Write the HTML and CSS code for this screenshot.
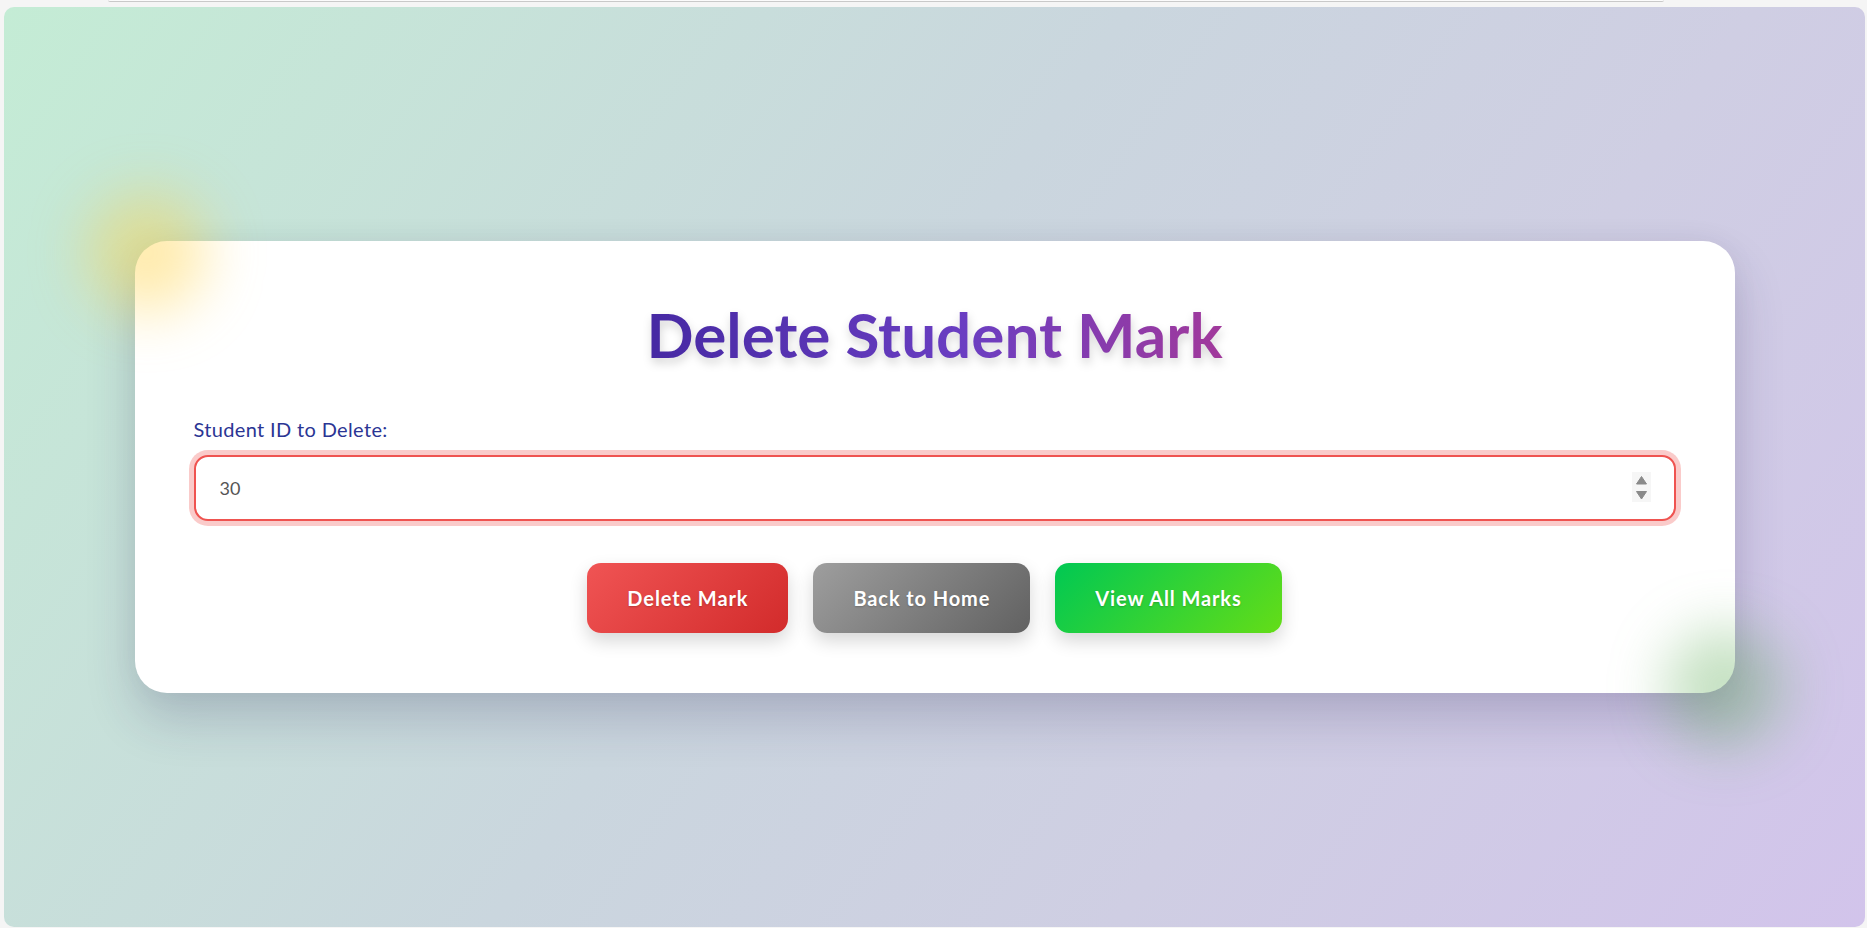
FILE: index.html
```html
<!DOCTYPE html>
<html lang="en">
<head>
<meta charset="utf-8">
<title>Delete Student Mark</title>
<link rel="stylesheet" href="styles.css">
</head>
<body>
  <div class="topbar"></div>
  <main class="panel">
    <section class="card">
      <div class="blob blob-yellow"></div>
      <div class="blob blob-green"></div>
      <h1 class="title">Delete Student Mark</h1>
      <form class="form" onsubmit="return false;">
        <label class="label" for="sid">Student ID to Delete:</label>
        <div class="field">
          <input class="input" id="sid" type="text" value="30">
          <svg class="spin" width="19" height="30" viewBox="0 0 19 30">
            <rect x="0" y="0" width="19" height="30" fill="#f6f6f6"/>
            <path d="M4.5 12 L14.5 12 L9.5 4.5 Z" fill="#8a8a8a" stroke="#8a8a8a" stroke-width="1" stroke-linejoin="round"/>
            <path d="M4.5 19.5 L14.5 19.5 L9.5 27 Z" fill="#8a8a8a" stroke="#8a8a8a" stroke-width="1" stroke-linejoin="round"/>
          </svg>
        </div>
        <div class="actions">
          <button class="btn btn-red" type="button">Delete Mark</button>
          <button class="btn btn-gray" type="button">Back to Home</button>
          <button class="btn btn-green" type="button">View All Marks</button>
        </div>
      </form>
    </section>
  </main>
</body>
</html>
```
FILE: styles.css
```css
* { box-sizing: border-box; }
html, body { margin: 0; padding: 0; }
body {
  background: #f5f5f5;
  font-family: "Lato", "Noto Sans", sans-serif;
  padding-left: 4px;
  height: 928px;
  overflow: hidden;
}
.topbar {
  margin-left: 104px;
  width: 1556px;
  height: 2px;
  border-bottom: 1px solid #c9c9c9;
  border-radius: 0 0 6px 6px;
  background: #fbfbfb;
}
.panel {
  margin-top: 5px;
  width: 1861px;
  height: 920px;
  border-radius: 10px;
  background: linear-gradient(125deg, #c4ecd5 0%, #cad6de 45%, #cfcee3 70%, #d2c4eb 100%);
  display: flex;
  align-items: center;
  justify-content: center;
}
.card {
  position: relative;
  width: 1600px;
  padding: 56px 59px 60px;
  background: #ffffff;
  border-radius: 32px;
  box-shadow: 0 26px 50px rgba(45, 35, 90, 0.20), 0 0 30px rgba(0, 0, 0, 0.04);
}
.blob {
  position: absolute;
  border-radius: 50%;
  filter: blur(28px);
  pointer-events: none;
}
.blob-yellow {
  width: 120px;
  height: 120px;
  left: -48px;
  top: -48px;
  background: rgba(255, 208, 60, 0.42);
}
.blob-green {
  width: 120px;
  height: 120px;
  right: -50px;
  bottom: -55px;
  background: rgba(90, 170, 80, 0.35);
}
.title {
  width: fit-content;
  margin: 0 auto 45px;
  text-align: center;
  font-size: 62px;
  line-height: 1.2;
  font-weight: 700;
  background: linear-gradient(90deg, #4629a3 0%, #6a3ec2 55%, #a1399b 100%);
  -webkit-background-clip: text;
  background-clip: text;
  color: transparent;
  -webkit-text-fill-color: transparent;
  filter: drop-shadow(1px 5px 5px rgba(0, 0, 0, 0.16));
}
.form { display: flex; flex-direction: column; }
.label {
  display: block;
  font-size: 20px;
  line-height: 24px;
  letter-spacing: 0.35px;
  color: #2b3594;
  font-weight: 400;
  margin-bottom: 14px;
}
.field { position: relative; }
.input {
  display: block;
  width: 100%;
  height: 66px;
  padding: 0 24px;
  border: 2px solid #ef5350;
  border-radius: 14px;
  box-shadow: 0 0 0 5px rgba(239, 83, 80, 0.3);
  font-family: inherit;
  font-size: 18px;
  color: #555555;
  outline: none;
  background: #fff;
}
.spin {
  position: absolute;
  right: 25px;
  top: 17px;
}
.actions {
  display: flex;
  justify-content: center;
  gap: 25px;
  margin-top: 42px;
}
.btn {
  height: 70px;
  padding: 0 40px;
  border: none;
  border-radius: 14px;
  font-family: inherit;
  font-size: 20px;
  letter-spacing: 0.9px;
  font-weight: 700;
  color: #fff;
  text-shadow: 0 1px 2px rgba(0, 0, 0, 0.2);
  box-shadow: 0 8px 18px rgba(0, 0, 0, 0.16);
  cursor: pointer;
}
.btn-red { background: linear-gradient(135deg, #f05454 0%, #d22b2b 100%); }
.btn-gray { background: linear-gradient(135deg, #9e9e9e 0%, #616161 100%); }
.btn-green { background: linear-gradient(135deg, #00c853 0%, #64dd17 100%); }
```
